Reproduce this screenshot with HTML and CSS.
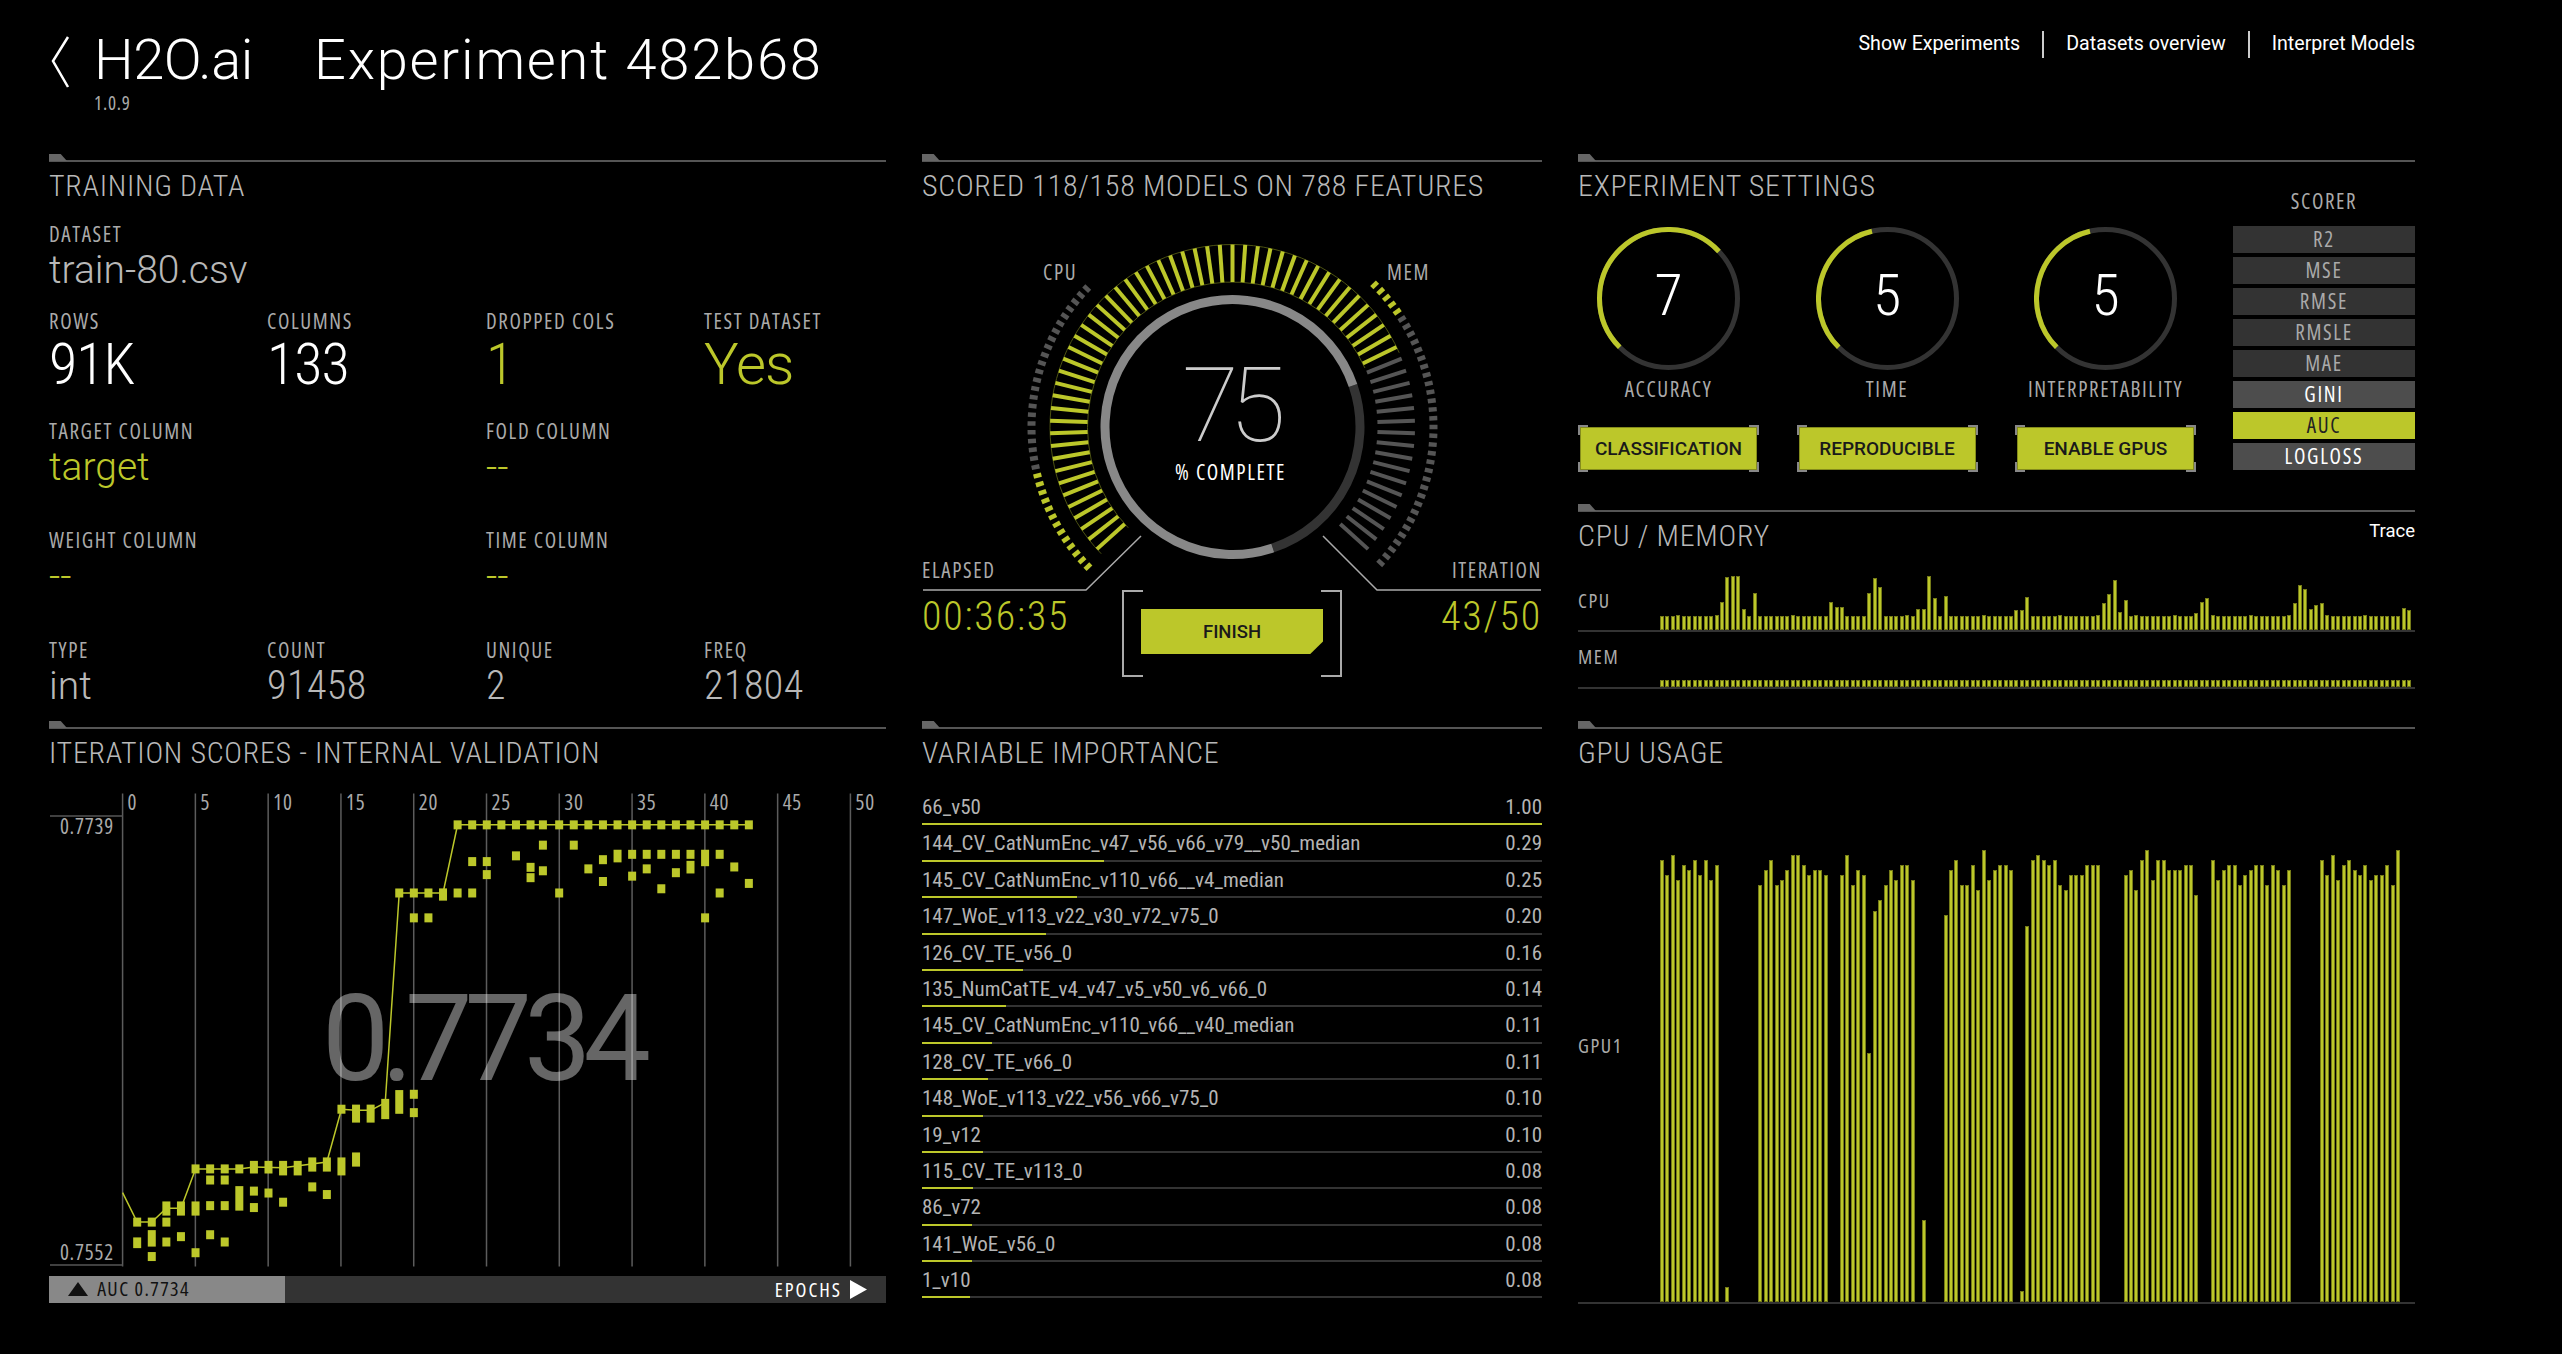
FILE: index.html
```html
<!DOCTYPE html>
<html lang="en">
<head>
    <meta charset="UTF-8">
    <meta name="viewport" content="width=device-width, initial-scale=1.0">
    <title>Experiment 482b68</title>
    <link rel="stylesheet" href="styles.css">
</head>
<body>
    <header class="topbar">
        <div class="brand">
            <svg class="back" width="20" height="54" viewBox="0 0 20 54"><polyline points="17,2 2,26 17,52" fill="none" stroke="#fff" stroke-width="2.5"/></svg>
            <div class="logo">
                <div class="logo-name">H2O.ai</div>
                <div class="logo-version">1.0.9</div>
            </div>
            <div class="exp-name">Experiment 482b68</div>
        </div>
        <nav class="topnav">
            <a>Show Experiments</a>
            <a>Datasets overview</a>
            <a>Interpret Models</a>
        </nav>
    </header>

    <main class="dash">
        <!-- training data -->
        <section class="panel">
            <h2 class="panel-title">TRAINING DATA</h2>
            <div class="data-grid">
                <div class="field field-dataset">
                    <div class="label">DATASET</div>
                    <div class="val">train-80.csv</div>
                </div>
                <div class="field">
                    <div class="label">ROWS</div>
                    <div class="val val-big val-white">91K</div>
                </div>
                <div class="field">
                    <div class="label">COLUMNS</div>
                    <div class="val val-big val-white">133</div>
                </div>
                <div class="field">
                    <div class="label">DROPPED COLS</div>
                    <div class="val val-big val-lime">1</div>
                </div>
                <div class="field">
                    <div class="label">TEST DATASET</div>
                    <div class="val val-big val-wide val-lime">Yes</div>
                </div>
                <div class="field field-wide">
                    <div class="label">TARGET COLUMN</div>
                    <div class="val val-lime">target</div>
                </div>
                <div class="field field-wide">
                    <div class="label">FOLD COLUMN</div>
                    <div class="val val-lime">--</div>
                </div>
                <div class="field field-wide">
                    <div class="label">WEIGHT COLUMN</div>
                    <div class="val val-lime">--</div>
                </div>
                <div class="field field-wide">
                    <div class="label">TIME COLUMN</div>
                    <div class="val val-lime">--</div>
                </div>
                <div class="field">
                    <div class="label">TYPE</div>
                    <div class="val">int</div>
                </div>
                <div class="field">
                    <div class="label">COUNT</div>
                    <div class="val val-num">91458</div>
                </div>
                <div class="field">
                    <div class="label">UNIQUE</div>
                    <div class="val val-num">2</div>
                </div>
                <div class="field">
                    <div class="label">FREQ</div>
                    <div class="val val-num">21804</div>
                </div>
            </div>
        </section>

        <!-- gauge -->
        <section class="panel">
            <h2 class="panel-title">SCORED 118/158 MODELS ON 788 FEATURES</h2>
            <div class="gauge">
                <svg class="gauge-svg" id="gauge-svg" width="620" height="470" viewBox="0 0 620 470"></svg>
                <span class="label gauge-cpu">CPU</span>
                <span class="label gauge-mem">MEM</span>
                <div class="gauge-center">
                    <div class="gauge-num">75</div>
                    <div class="label gauge-sub">% COMPLETE</div>
                </div>
                <div class="gauge-foot">
                    <div class="stat">
                        <div class="label">ELAPSED</div>
                        <div class="stat-val">00:36:35</div>
                    </div>
                    <div class="finish-wrap">
                        <button class="finish-btn">FINISH</button>
                    </div>
                    <div class="stat stat-right">
                        <div class="label">ITERATION</div>
                        <div class="stat-val">43/50</div>
                    </div>
                </div>
            </div>
        </section>

        <!-- right column, top: settings + cpu/mem -->
        <div class="right-top">
            <section class="panel settings">
                <div class="settings-main">
                    <h2 class="panel-title">EXPERIMENT SETTINGS</h2>
                    <div class="dials">
                        <div class="dial">
                            <div class="dial-ring" data-end="47"><div class="dial-num">7</div></div>
                            <div class="label">ACCURACY</div>
                            <div class="opt-btn"><span>CLASSIFICATION</span></div>
                        </div>
                        <div class="dial">
                            <div class="dial-ring" data-end="347"><div class="dial-num">5</div></div>
                            <div class="label">TIME</div>
                            <div class="opt-btn"><span>REPRODUCIBLE</span></div>
                        </div>
                        <div class="dial">
                            <div class="dial-ring" data-end="347"><div class="dial-num">5</div></div>
                            <div class="label">INTERPRETABILITY</div>
                            <div class="opt-btn"><span>ENABLE GPUS</span></div>
                        </div>
                    </div>
                </div>
                <div class="scorer">
                    <div class="label scorer-title">SCORER</div>
                    <div class="scorer-item">R2</div>
                    <div class="scorer-item">MSE</div>
                    <div class="scorer-item">RMSE</div>
                    <div class="scorer-item">RMSLE</div>
                    <div class="scorer-item">MAE</div>
                    <div class="scorer-item scorer-on">GINI</div>
                    <div class="scorer-item scorer-sel">AUC</div>
                    <div class="scorer-item scorer-on">LOGLOSS</div>
                </div>
            </section>
            <section class="panel">
                <div class="title-row">
                    <h2 class="panel-title">CPU / MEMORY</h2>
                    <a class="trace">Trace</a>
                </div>
                <div class="usage usage-cpu">
                    <div class="label">CPU</div>
                    <div class="bars" id="cpu-bars"></div>
                </div>
                <div class="usage usage-mem">
                    <div class="label">MEM</div>
                    <div class="bars" id="mem-bars"></div>
                </div>
            </section>
        </div>

        <!-- iteration chart -->
        <section class="panel">
            <h2 class="panel-title">ITERATION SCORES - INTERNAL VALIDATION</h2>
            <svg class="score-chart" id="score-chart" width="837" height="507" viewBox="0 0 837 507"></svg>
            <div class="epoch-bar">
                <div class="epoch-fill">
                    <svg width="20" height="14" viewBox="0 0 20 14"><polygon points="10,0 20,14 0,14" fill="#111"/></svg>
                    <span>AUC 0.7734</span>
                </div>
                <div class="epoch-label">
                    <span>EPOCHS</span>
                    <svg width="17" height="19" viewBox="0 0 17 19"><polygon points="0,0 17,9.5 0,19" fill="#fff"/></svg>
                </div>
            </div>
        </section>

        <!-- variable importance -->
        <section class="panel">
            <h2 class="panel-title">VARIABLE IMPORTANCE</h2>
            <div class="var-list" id="var-list"></div>
        </section>

        <!-- gpu -->
        <section class="panel">
            <h2 class="panel-title">GPU USAGE</h2>
            <div class="usage usage-gpu">
                <div class="label">GPU1</div>
                <div class="bars" id="gpu-bars"></div>
            </div>
        </section>
    </main>
    <script src="script.js"></script>
</body>
</html>
```

FILE: styles.css
```css
*{
    margin: 0;
    padding: 0;
    box-sizing: border-box;
}

body{
    background: #000;
    color: #aaa;
    font-family: "Open Sans", "Liberation Sans", sans-serif;
    font-stretch: 75%;
    font-weight: 400;
    padding: 0 147px 0 49px;
    height: 1354px;
    overflow: hidden;
}

/* top bar */
.topbar{
    height: 160px;
    display: flex;
    justify-content: space-between;
}
.brand{
    display: flex;
    align-items: flex-start;
    padding-top: 32px;
    color: #fff;
    font-family: Roboto, sans-serif;
    font-stretch: 100%;
    font-weight: 300;
    font-size: 56px;
    line-height: 56px;
}
.back{
    margin: 3px 23px 0 2px;
}
.logo{
    width: 220px;
}
.logo-name{
    letter-spacing: -.5px;
}
.logo-version{
    margin-top: 3px;
    font-family: "Open Sans", sans-serif;
    font-stretch: 75%;
    font-size: 19px;
    line-height: 24px;
    color: #aaa;
    font-weight: 400;
    letter-spacing: .8px;
}
.exp-name{
    letter-spacing: 1.8px;
}
.topnav{
    display: flex;
    margin-top: 31px;
    height: 27px;
    color: #fff;
    font-family: Roboto, sans-serif;
    font-stretch: 100%;
    font-size: 19.6px;
    line-height: 26px;
}
.topnav a{
    padding: 0 22px;
    border-left: 2px solid #ccc;
}
.topnav a:first-child{
    border-left: 0;
}
.topnav a:last-child{
    padding-right: 0;
}

/* panels */
.dash{
    display: grid;
    grid-template-columns: 837px 620px 837px;
    grid-template-rows: 567px 575px;
    column-gap: 36px;
}
.panel{
    position: relative;
    border-top: 2px solid #555;
}
.panel::before{
    content: "";
    position: absolute;
    left: 0;
    top: -8px;
    width: 18px;
    height: 7px;
    background: #666;
    clip-path: polygon(0 0, 65% 0, 100% 100%, 0 100%);
}
.panel-title{
    margin-top: 6px;
    font-family: Roboto, sans-serif;
    font-size: 30px;
    line-height: 35px;
    font-weight: 300;
    color: #b8b8b8;
    letter-spacing: .7px;
    white-space: nowrap;
}
.title-row{
    display: flex;
    justify-content: space-between;
}
.label{
    font-size: 21px;
    line-height: 24px;
    color: #aaa;
    letter-spacing: 1.6px;
}

/* training data */
.data-grid{
    margin-top: 19px;
    display: grid;
    grid-template-columns: 218px 219px 218px 182px;
    grid-template-rows: 87px repeat(4, 109.5px);
}
.field-dataset{
    grid-column: 1 / 5;
}
.field-wide{
    grid-column: span 2;
}
.val{
    font-family: Roboto, sans-serif;
    font-stretch: 100%;
    font-size: 39px;
    line-height: 48px;
    font-weight: 300;
    color: #b8b8b8;
}
.val-num{
    font-stretch: 75%;
    font-size: 40px;
    letter-spacing: .5px;
}
.val-big{
    font-stretch: 75%;
    font-size: 58px;
    line-height: 62px;
    letter-spacing: -1px;
}
.val-wide{
    font-stretch: 100%;
    letter-spacing: -1px;
}
.val-white{
    color: #fff;
}
.val-lime{
    color: #bcc72a;
}

/* gauge */
.gauge{
    position: relative;
    height: 470px;
}
.gauge-svg{
    position: absolute;
    left: 0;
    top: 0;
}
.gauge-cpu{
    position: absolute;
    left: 121px;
    top: 57px;
}
.gauge-mem{
    position: absolute;
    left: 465px;
    top: 57px;
}
.gauge-center{
    position: absolute;
    left: 207px;
    top: 153px;
    width: 200px;
    text-align: center;
}
.gauge-num{
    font-family: Roboto, sans-serif;
    font-stretch: 100%;
    font-weight: 100;
    font-size: 104px;
    line-height: 100px;
    letter-spacing: -10px;
    color: #ccc;
}
.gauge-sub{
    color: #fff;
    margin-left: 3px;
    margin-top: 4px;
}
.gauge-foot{
    position: relative;
    display: flex;
    justify-content: space-between;
    padding-top: 355px;
}
.stat{
    flex: 1;
}
.stat-right{
    text-align: right;
}
.stat-val{
    margin-top: 15px;
    font-family: Roboto, sans-serif;
    font-size: 40px;
    line-height: 40px;
    font-weight: 300;
    color: #bcc72a;
    letter-spacing: 1.8px;
}
.finish-wrap{
    position: relative;
    width: 220px;
    height: 83px;
    margin-top: 32px;
    padding: 19px;
}
.finish-wrap::before,
.finish-wrap::after{
    content: "";
    position: absolute;
    top: 0;
    width: 19px;
    height: 83px;
    border: 2px solid #aaa;
}
.finish-wrap::before{
    left: 0;
    border-right: 0;
}
.finish-wrap::after{
    right: 0;
    border-left: 0;
}
.finish-btn{
    display: block;
    width: 182px;
    height: 45px;
    border: 0;
    background: #bcc72a;
    color: #1a1a1a;
    font-family: Roboto, sans-serif;
    font-size: 18.5px;
    font-weight: 500;
    clip-path: polygon(0 0, 100% 0, 100% 72%, 93% 100%, 0 100%);
}

/* settings */
.right-top{
    display: flex;
    flex-direction: column;
}
.settings{
    height: 350px;
    display: flex;
    justify-content: space-between;
}
.dials{
    margin-top: 24px;
    display: flex;
    gap: 37.5px;
}
.dial{
    width: 181px;
    text-align: center;
}
.dial-ring{
    position: relative;
    width: 143px;
    height: 143px;
    margin: 0 auto 7px;
}
.dial-num{
    position: absolute;
    left: 0;
    right: 0;
    top: 36px;
    font-family: Roboto, sans-serif;
    font-size: 58px;
    line-height: 64px;
    font-weight: 300;
    color: #fff;
}
.dial .label{
    white-space: nowrap;
}
.opt-btn{
    margin-top: 24px;
    height: 47px;
    padding: 2px;
    /* little L shaped marks on the four corners */
    background:
        linear-gradient(#888, #888) 0 0 / 10px 2px no-repeat,
        linear-gradient(#888, #888) 0 0 / 2px 10px no-repeat,
        linear-gradient(#888, #888) 100% 0 / 10px 2px no-repeat,
        linear-gradient(#888, #888) 100% 0 / 2px 10px no-repeat,
        linear-gradient(#888, #888) 0 100% / 10px 2px no-repeat,
        linear-gradient(#888, #888) 0 100% / 2px 10px no-repeat,
        linear-gradient(#888, #888) 100% 100% / 10px 2px no-repeat,
        linear-gradient(#888, #888) 100% 100% / 2px 10px no-repeat;
}
.opt-btn span{
    display: block;
    height: 43px;
    line-height: 41px;
    background: #bcc72a;
    border: 1px solid #858c1c;
    color: #1a1a1a;
    font-family: Roboto, sans-serif;
    font-stretch: 100%;
    font-size: 19px;
    font-weight: 500;
}
.scorer{
    width: 182px;
    padding-top: 27px;
}
.scorer-title{
    text-align: center;
    margin-bottom: 13px;
}
.scorer-item{
    height: 27px;
    margin-bottom: 4px;
    background: #333;
    text-align: center;
    font-size: 21px;
    line-height: 26px;
    letter-spacing: 1.7px;
    color: #aaa;
}
.scorer-on{
    background: #4d4d4d;
    color: #fff;
}
.scorer-sel{
    background: #bcc72a;
    color: #222;
}

/* bar rows */
.usage{
    display: flex;
    border-bottom: 2px solid #333;
}
.usage .label{
    width: 82px;
    font-size: 20px;
}
.bars{
    flex: 1;
    display: flex;
    justify-content: space-between;
    align-items: flex-end;
    margin-right: 3px;
}
.bar{
    width: 4px;
    background: #bcc72a;
    box-shadow: inset 0 0 0 1px #757b18;
}
.usage-cpu{
    height: 79px;
}
.usage-cpu .label{
    padding-top: 36px;
}
.usage-mem{
    height: 57px;
}
.usage-mem .label{
    padding-top: 13px;
}
.usage-gpu{
    height: 534px;
}
.usage-gpu .label{
    padding-top: 264px;
}
.trace{
    color: #fff;
    font-family: Roboto, sans-serif;
    font-stretch: 100%;
    font-size: 18.5px;
    line-height: 24px;
    margin-top: 7px;
}

/* iteration chart */
.score-chart{
    display: block;
    margin-top: -1px;
}
.score-chart text{
    font-family: "Open Sans", sans-serif;
    font-stretch: 75%;
    font-size: 21px;
    letter-spacing: .8px;
    fill: #aaa;
}
.score-chart .big-score{
    font-family: Roboto, sans-serif;
    font-stretch: 100%;
    font-weight: 400;
    font-size: 120px;
    letter-spacing: -8px;
    fill: #fff;
    fill-opacity: .4;
}
.epoch-bar{
    height: 27px;
    background: #333;
    display: flex;
    justify-content: space-between;
}
.epoch-fill{
    width: 236px;
    padding-left: 19px;
    background: #888;
    color: #111;
    font-size: 20px;
    line-height: 26px;
    letter-spacing: 1.4px;
}
.epoch-fill svg{
    margin-right: 4px;
}
.epoch-label{
    display: flex;
    align-items: center;
    gap: 8px;
    padding-right: 19px;
    color: #fff;
    font-size: 20px;
    letter-spacing: 2px;
}

/* variable importance */
.var-list{
    margin-top: 19px;
}
.var-row{
    height: 36.4px;
}
.var-text{
    display: flex;
    justify-content: space-between;
    height: 34.4px;
    font-family: Roboto, sans-serif;
    font-size: 21px;
    line-height: 37px;
    color: #b4b4b4;
}
.var-track{
    height: 2px;
    background: #333;
}
.var-fill{
    height: 2px;
    background: #bcc72a;
}
```

FILE: script.js
```js
const LIME = "#bcc72a";

function pt(cx, cy, r, deg){
    let a = (deg - 90) * Math.PI / 180;
    return [cx + r * Math.cos(a), cy + r * Math.sin(a)];
}

function arc(cx, cy, r, from, to, color, width){
    let p1 = pt(cx, cy, r, from);
    let p2 = pt(cx, cy, r, to);
    let large = to - from > 180 ? 1 : 0;
    return `<path d="M${p1[0]} ${p1[1]}A${r} ${r} 0 ${large} 1 ${p2[0]} ${p2[1]}" fill="none" stroke="${color}" stroke-width="${width}"/>`;
}

function tick(cx, cy, r1, r2, deg, color, width){
    let p1 = pt(cx, cy, r1, deg);
    let p2 = pt(cx, cy, r2, deg);
    return `<line x1="${p1[0]}" y1="${p1[1]}" x2="${p2[0]}" y2="${p2[1]}" stroke="${color}" stroke-width="${width}"/>`;
}

// big gauge
function renderGauge(){
    let cx = 310.5, cy = 224, text = "";
    text += arc(cx, cy, 127.5, 71, 161.6, "#333", 9);
    text += arc(cx, cy, 127.5, 161.6, 431, "#888", 9);
    text += arc(cx, cy, 145, -134, 66, "#4c5212", 1);
    text += arc(cx, cy, 182.5, -134, 66, "#4c5212", 1);
    for(let d = -132; d <= 132; d += 4){
        text += tick(cx, cy, 145, 182.5, d, d <= 64 ? LIME : "#555", 4);
    }
    for(let d = -134; d <= -45; d += 2.5){
        text += tick(cx, cy, 197, 205, d, d < -103 ? LIME : "#555", 4.5);
    }
    for(let d = 45; d <= 134; d += 2.5){
        text += tick(cx, cy, 197, 205, d, d < 56 ? LIME : "#555", 4.5);
    }
    text += `<polyline points="1,387 164,387 219,333" fill="none" stroke="#aaa" stroke-width="1.5"/>`;
    text += `<polyline points="619,387 455,387 401,333" fill="none" stroke="#aaa" stroke-width="1.5"/>`;
    document.getElementById("gauge-svg").innerHTML = text;
}
renderGauge();

// small dials
let rings = document.querySelectorAll(".dial-ring");
for(let i = 0; i < rings.length; i++){
    let end = Number(rings[i].dataset.end);
    if(end < 225) end += 360;
    let svg = `<svg width="143" height="143" viewBox="0 0 143 143">`;
    svg += `<circle cx="71.5" cy="71.5" r="69" fill="none" stroke="#333" stroke-width="5"/>`;
    svg += arc(71.5, 71.5, 69, 225, end, LIME, 5);
    svg += `</svg>`;
    rings[i].insertAdjacentHTML("afterbegin", svg);
}

// bars
function renderBars(id, heights){
    let text = "";
    for(let i = 0; i < heights.length; i++){
        text += `<div class="bar" style="height:${heights[i]}px"></div>`;
    }
    document.getElementById(id).innerHTML = text;
}

let cpuPeaks = {11:28,12:53,13:54,14:54,15:21,17:37,31:28,32:23,33:23,38:37,39:52,40:43,47:21,48:21,49:54,50:32,52:34,
    65:20,66:20,67:33,81:27,82:36,83:50,84:18,85:30,98:17,99:28,100:32,116:27,117:45,118:41,119:21,120:25,121:27,136:22,137:20};
let cpu = [], mem = [];
for(let i = 0; i < 138; i++){
    cpu.push(cpuPeaks[i] || (i % 7 == 3 ? 15 : 14));
    mem.push(7);
}
renderBars("cpu-bars", cpu);
renderBars("mem-bars", mem);

// tops of the gpu bars, read off the chart; 0 = nothing drawn
let gpuTops = {
    0:[365,404,352,417,378,391,365,404,365,417,378],
    12:[1480],
    18:[431,391,365,431,417,391,352,352,378,404,391,391,404],
    33:[404,352,431,391,404,870,497,470,431,391,417,378,378,417],
    48:[1306],
    52:[510,391,365,431,431,378,444,338,417,391,378,378,391],
    66:[1492,537,365,352,365,378,365,431,444,404,404,404,378,378,378],
    85:[404,391,444,365,338,417,365,365,391,391,391,378,378,457],
    101:[365,417,391,378,378,431,404,391,378,378,431,378,391,431,391],
    121:[365,404,352,417,378,365,391,404,378,417,404,404,378,431,338]
};
let gpu = [];
for(let i = 0; i < 138; i++) gpu.push(0);
for(let start in gpuTops){
    for(let j = 0; j < gpuTops[start].length; j++){
        gpu[Number(start) + j] = (1520 - gpuTops[start][j]) / 2.613;
    }
}
renderBars("gpu-bars", gpu);

// iteration chart, points as [x, y] or [x, top, bottom] in reference chart units
let scorePts = [
    [191,1312],[191,1352,1380],[217,1312],[217,1333,1376],[217,1402],[243,1258,1295],[243,1312],[243,1364],
    [269,1258,1295],[269,1350],[295,1173],[295,1258,1295],[295,1392],[321,1173],[321,1202],[321,1269],[321,1345],
    [347,1173],[347,1202],[347,1269],[347,1364],[373,1173],[373,1218,1282],[399,1152,1185],[399,1231],[399,1274],
    [425,1152,1185],[425,1236],[451,1152,1190],[451,1260],[477,1152,1190],[503,1143,1180],[503,1220],[529,1143,1180],[529,1240],
    [555,1017],[555,1143,1190],[581,1005,1052],[581,1130,1167],[607,1005,1052],[633,990,1043],[658,452],[658,967,1029],
    [684,452],[684,517],[684,978],[684,1026],[710,452],[710,517],[736,440,472],[762,452],[788,370],[788,452],[814,370],[814,404],
    [866,355],[892,385],[892,412],[914,327],[914,394],[943,452],[969,327],[995,389],[1021,365],[1021,422],[1047,339,372],
    [1073,351],[1073,408],[1099,351],[1099,389],[1125,351],[1125,441],[1151,351],[1151,399],[1177,351],[1177,368,401],
    [1203,339,382],[1203,517],[1229,351],[1229,452],[1255,384],[1281,427]
];
let topRow = [762,788,814,840,866,892,914,943,969,995,1021,1047,1073,1099,1125,1151,1177,1203,1229,1255,1281];
for(let i = 0; i < topRow.length; i++) scorePts.push([topRow[i], 274]);

let scoreLine = [[165,1235],[191,1312],[217,1312],[243,1276],[269,1276],[295,1173],[373,1173],[399,1168],[451,1170],[529,1155],
    [555,1017],[581,1020],[607,1020],[633,1000],[658,452],[736,452],[762,274],[1281,274]];

function cx(z){ return z / 1.782 - 19; }
function cy(z){ return z / 2.613 - 49; }

function renderChart(){
    let text = "";
    for(let k = 0; k <= 10; k++){
        let x = cx(165 + k * 129.7);
        text += `<line x1="${x}" y1="24.5" x2="${x}" y2="497.5" stroke="#5c5c5c" stroke-width="1.5"/>`;
        text += `<text x="${x + 5}" y="41">${k * 5}</text>`;
    }
    text += `<path d="M1 47H74M1 496H74" stroke="#555" stroke-width="1.5" fill="none"/>`;
    text += `<text x="65" y="65" text-anchor="end">0.7739</text>`;
    text += `<text x="65" y="491" text-anchor="end">0.7552</text>`;

    let line = [];
    for(let i = 0; i < scoreLine.length; i++){
        line.push(cx(scoreLine[i][0]) + "," + cy(scoreLine[i][1]));
    }
    text += `<polyline points="${line.join(" ")}" fill="none" stroke="${LIME}" stroke-width="1.5"/>`;

    for(let i = 0; i < scorePts.length; i++){
        let p = scorePts[i];
        let top = p.length == 3 ? cy(p[1]) : cy(p[1]) - 4.5;
        let h = p.length == 3 ? (p[2] - p[1]) / 2.613 : 9;
        text += `<rect x="${cx(p[0]) - 4}" y="${top}" width="8" height="${h}" fill="${LIME}"/>`;
    }
    text += `<text class="big-score" x="273" y="311">0.7734</text>`;
    document.getElementById("score-chart").innerHTML = text;
}
renderChart();

// variable importance
let vars = [
    ["66_v50", "1.00", 100],
    ["144_CV_CatNumEnc_v47_v56_v66_v79__v50_median", "0.29", 29.4],
    ["145_CV_CatNumEnc_v110_v66__v4_median", "0.25", 25],
    ["147_WoE_v113_v22_v30_v72_v75_0", "0.20", 20],
    ["126_CV_TE_v56_0", "0.16", 16.3],
    ["135_NumCatTE_v4_v47_v5_v50_v6_v66_0", "0.14", 13.6],
    ["145_CV_CatNumEnc_v110_v66__v40_median", "0.11", 11.3],
    ["128_CV_TE_v66_0", "0.11", 10.6],
    ["148_WoE_v113_v22_v56_v66_v75_0", "0.10", 9.8],
    ["19_v12", "0.10", 9.8],
    ["115_CV_TE_v113_0", "0.08", 8.3],
    ["86_v72", "0.08", 8.1],
    ["141_WoE_v56_0", "0.08", 8.1],
    ["1_v10", "0.08", 7.7]
];
let varText = "";
for(let i = 0; i < vars.length; i++){
    varText += `
        <div class="var-row">
            <div class="var-text"><span>${vars[i][0]}</span><span>${vars[i][1]}</span></div>
            <div class="var-track"><div class="var-fill" style="width:${vars[i][2]}%"></div></div>
        </div>`;
}
document.getElementById("var-list").innerHTML = varText;
```
